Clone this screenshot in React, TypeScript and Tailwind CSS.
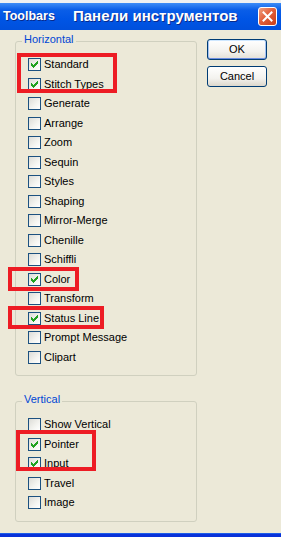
import React from "react";

const FONT = { fontFamily: '"Liberation Sans", Arial, sans-serif' };

function Check({ checked }: { checked?: boolean }) {
  return (
    <span className="w-[13px] h-[13px] shrink-0 border border-[#1c5180] bg-[linear-gradient(135deg,#dcdcd7_0%,#f4f4f0_60%,#ffffff_100%)] relative">
      {checked && (
        <svg width="11" height="11" viewBox="0 0 11 11" className="absolute left-0 top-0" shapeRendering="crispEdges">
          <rect x="2" y="4" width="1" height="3" fill="#21a121" />
          <rect x="3" y="5" width="1" height="3" fill="#21a121" />
          <rect x="4" y="6" width="1" height="3" fill="#21a121" />
          <rect x="5" y="5" width="1" height="3" fill="#21a121" />
          <rect x="6" y="4" width="1" height="3" fill="#21a121" />
          <rect x="7" y="3" width="1" height="3" fill="#21a121" />
          <rect x="8" y="2" width="1" height="3" fill="#21a121" />
        </svg>
      )}
    </span>
  );
}

function Row({ label, checked }: { label: string; checked?: boolean }) {
  return (
    <div className="h-[19.5px] flex items-center pl-[12px]">
      <Check checked={checked} />
      <span className="ml-[3px] text-[11px] leading-[13px] text-black whitespace-nowrap">{label}</span>
    </div>
  );
}

function Group({ title, children, className }: { title: string; children: React.ReactNode; className: string }) {
  return (
    <div className={"relative border border-[#d0d0bf] rounded-[3px] " + className}>
      <span className="absolute left-[6px] top-[-9px] px-[2px] bg-[#ece9d8] text-[11px] leading-[13px] text-[#0046d5] whitespace-nowrap">
        {title}
      </span>
      {children}
    </div>
  );
}

const horizontal: [string, boolean][] = [
  ["Standard", true],
  ["Stitch Types", true],
  ["Generate", false],
  ["Arrange", false],
  ["Zoom", false],
  ["Sequin", false],
  ["Styles", false],
  ["Shaping", false],
  ["Mirror-Merge", false],
  ["Chenille", false],
  ["Schiffli", false],
  ["Color", true],
  ["Transform", false],
  ["Status Line", true],
  ["Prompt Message", false],
  ["Clipart", false],
];

const vertical: [string, boolean][] = [
  ["Show Vertical", false],
  ["Pointer", true],
  ["Input", true],
  ["Travel", false],
  ["Image", false],
];

export default function App() {
  return (
    <div className="w-[281px] h-[537px] relative overflow-hidden bg-[#ece9d8] flex flex-col" style={FONT}>
      <div className="h-[3px] bg-[#eef0f2]" />
      <div className="h-[27px] flex items-center bg-[linear-gradient(180deg,#3d8cf7_0%,#0a5ee8_25%,#0055e5_60%,#0050dc_100%)]">
        <span className="ml-[3px] w-[70px] text-[12.5px] font-bold text-white [text-shadow:1px_1px_0_#0a2a8a]">Toolbars</span>
        <span className="text-[15px] font-bold text-white [text-shadow:1px_1px_0_#0a2a8a] whitespace-nowrap">
          Панели инструментов
        </span>
        <span className="ml-auto mr-[4px] w-[19px] h-[19px] rounded-[3px] border border-white bg-[linear-gradient(135deg,#f0a080_0%,#e2603c_45%,#c83d18_100%)] flex items-center justify-center">
          <svg width="11" height="11" viewBox="0 0 11 11">
            <path d="M1.5 1.5 L9.5 9.5 M9.5 1.5 L1.5 9.5" stroke="#ffffff" strokeWidth="2" strokeLinecap="square" />
          </svg>
        </span>
      </div>
      <div className="flex-1 flex pt-[9px]">
        <div className="ml-[15px] mt-[2px] w-[182px] flex flex-col">
          <Group title="Horizontal" className="h-[335px] pt-[13px]">
            {horizontal.map(([l, c]) => (
              <Row key={l} label={l} checked={c} />
            ))}
          </Group>
          <Group title="Vertical" className="mt-[25px] h-[121px] pt-[13px]">
            {vertical.map(([l, c]) => (
              <Row key={l} label={l} checked={c} />
            ))}
          </Group>
        </div>
        <div className="ml-[10px] flex flex-col gap-[6px]">
          <div className="w-[60px] h-[21px] rounded-[3px] border border-[#003c74] bg-[linear-gradient(180deg,#ffffff_0%,#f3f2ee_60%,#e3e0d6_100%)] shadow-[inset_0_1px_0_#cee7ff,inset_0_-1px_0_#6d8ee0,inset_1px_0_0_#a4c3f5,inset_-1px_0_0_#a4c3f5] flex items-center justify-center text-[11px] text-black">
            OK
          </div>
          <div className="w-[60px] h-[21px] rounded-[3px] border border-[#003c74] bg-[linear-gradient(180deg,#ffffff_0%,#f3f2ee_60%,#dcd7cc_100%)] flex items-center justify-center text-[11px] text-black">
            Cancel
          </div>
        </div>
      </div>
      <div className="h-[4px] bg-[#0831d9] border-t border-[#1c5ce8]" />

      <div className="absolute left-[17px] top-[53px] w-[100px] h-[40px] border-[4px] border-[#ed1c24]" />
      <div className="absolute left-[8px] top-[267px] w-[71px] h-[24px] border-[4px] border-[#ed1c24]" />
      <div className="absolute left-[8px] top-[306px] w-[96px] h-[23px] border-[4px] border-[#ed1c24]" />
      <div className="absolute left-[16px] top-[430px] w-[80px] h-[41px] border-[4px] border-[#ed1c24]" />
    </div>
  );
}
